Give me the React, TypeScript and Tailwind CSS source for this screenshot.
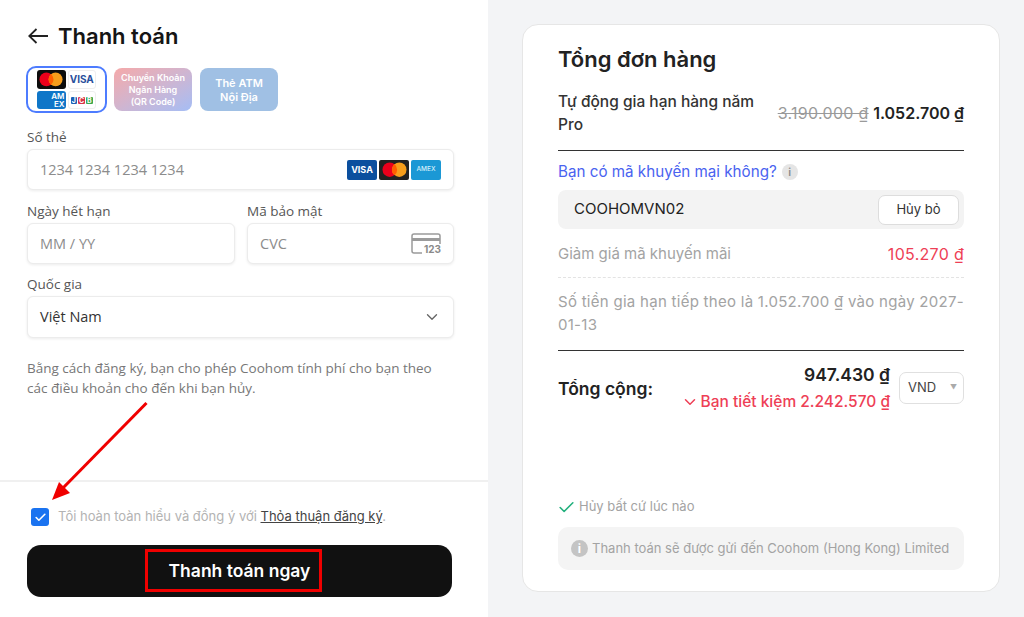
import { Check, ChevronDown } from "lucide-react";

const inputBox = "flex items-center rounded-md border border-[#ececec] bg-white px-3 shadow-[0_1px_3px_rgba(0,0,0,0.08)]";

function MasterCircles({ size }: { size: number }) {
    return (
        <svg width={size} height={(size * 16) / 26} viewBox="0 0 26 16">
            <circle cx="8" cy="8" r="7.5" fill="#eb001b" />
            <circle cx="18" cy="8" r="7.5" fill="#f79e1b" />
            <path d="M13 2.2a7.5 7.5 0 0 1 0 11.6a7.5 7.5 0 0 1 0-11.6z" fill="#ff5f00" />
        </svg>
    );
}

function CardTab() {
    return (
        <div className="-ml-[1px] grid h-[47px] w-[81px] grid-cols-2 gap-[2px] rounded-[10px] border-2 border-[#4d7cff] px-[9px] py-[2px]">
            <div className="flex items-center justify-center rounded-[3px] bg-[#0d0d0d]">
                <MasterCircles size={24} />
            </div>
            <div className="flex items-center justify-center rounded-[3px] border border-[#eeeeee] text-[10px] font-bold text-[#2a4f9c]">
                VISA
            </div>
            <div className="flex items-center justify-end rounded-[3px] bg-[#0f76c8] pr-[1px] text-right text-[8px] font-semibold leading-[8px] text-white">
                AM
                <br />
                EX
            </div>
            <div className="flex items-center justify-center gap-[1px] rounded-[3px] border border-[#eeeeee] text-[7px] font-bold leading-none">
                <span className="rounded-[1px] bg-[#1e5fb5] px-[1px] text-white">J</span>
                <span className="rounded-[1px] bg-[#d8344a] px-[1px] text-white">C</span>
                <span className="rounded-[1px] bg-[#3ba94e] px-[1px] text-white">B</span>
            </div>
        </div>
    );
}

function CvcIcon() {
    return (
        <div className="relative h-[21px] w-[30px]">
            <svg width="30" height="21" viewBox="0 0 30 21" fill="none" stroke="#9b9b9b" strokeWidth="1.5">
                <path d="M11 20H3a2 2 0 0 1-2-2V3a2 2 0 0 1 2-2h24a2 2 0 0 1 2 2v9" />
                <path d="M1 6.5h28" strokeWidth="3" />
            </svg>
            <span className="absolute bottom-[-1px] right-0 bg-white pl-[1px] font-['Inter'] text-[10px] font-bold leading-[11px] text-[#8a8a8a]">123</span>
        </div>
    );
}

function Field({ label, className, children }: { label: string; className?: string; children: React.ReactNode }) {
    return (
        <div className={className}>
            <div className="mb-[2px] h-[20px] font-['Open_Sans'] text-[13.5px] leading-[20px] text-[#555555]">{label}</div>
            {children}
        </div>
    );
}

function LeftPane() {
    return (
        <div className="relative flex h-full w-[488px] shrink-0 flex-col bg-white">
            <div className="flex-1 pl-[27px] pr-[34px] pt-[21px]">
                <div className="flex h-[30px] items-center gap-[10px]">
                    <svg width="20" height="16" viewBox="0 0 20 16" fill="none" stroke="#222222" strokeWidth="1.8" className="ml-[1px]">
                        <path d="M1 8H20M8.5 1L1.2 8l7.3 7" />
                    </svg>
                    <span className="text-[22px] font-semibold text-[#151515]">Thanh toán</span>
                </div>
                <div className="mt-[15px] flex items-center gap-[7px]">
                    <CardTab />
                    <div className="flex h-[43px] w-[78px] flex-col items-center justify-center rounded-[8px] bg-gradient-to-br from-[#f5a9a9] to-[#a4bdf5] text-center text-[9px] font-semibold leading-[12px] text-white">
                        <span>Chuyển Khoản</span>
                        <span>Ngân Hàng</span>
                        <span>(QR Code)</span>
                    </div>
                    <div className="ml-[1px] flex h-[43px] w-[78px] flex-col items-center justify-center rounded-[8px] bg-[#a0c0e4] text-center text-[11px] font-semibold leading-[14px] text-white">
                        <span>Thẻ ATM</span>
                        <span>Nội Địa</span>
                    </div>
                </div>
                <Field label="Số thẻ" className="mt-[14px]">
                    <div className={`${inputBox} h-[41px] justify-between`}>
                        <span className="font-['Open_Sans'] text-[14.5px] text-[#8c8c8c]">1234 1234 1234 1234</span>
                        <div className="flex items-center gap-[2px]">
                            <div className="flex h-[20px] w-[30px] items-center justify-center rounded-[2px] bg-[#0b4f9e] text-[9px] font-bold text-white">VISA</div>
                            <div className="flex h-[20px] w-[30px] items-center justify-center rounded-[2px] bg-[#222222]">
                                <MasterCircles size={25} />
                            </div>
                            <div className="flex h-[20px] w-[30px] items-center justify-center rounded-[2px] bg-[#1b98d5] text-[6.5px] font-medium text-[#d5effa]">AMEX</div>
                        </div>
                    </div>
                </Field>
                <div className="mt-[11px] flex gap-[12px]">
                    <Field label="Ngày hết hạn" className="w-[208px]">
                        <div className={`${inputBox} h-[41px]`}>
                            <span className="font-['Open_Sans'] text-[14.5px] text-[#8c8c8c]">MM / YY</span>
                        </div>
                    </Field>
                    <Field label="Mã bảo mật" className="flex-1">
                        <div className={`${inputBox} h-[41px] justify-between`}>
                            <span className="font-['Open_Sans'] text-[14.5px] text-[#8c8c8c]">CVC</span>
                            <CvcIcon />
                        </div>
                    </Field>
                </div>
                <Field label="Quốc gia" className="mt-[10px]">
                    <div className={`${inputBox} h-[42px] justify-between`}>
                        <span className="font-['Open_Sans'] text-[14.5px] text-[#333333]">Việt Nam</span>
                        <ChevronDown size={18} strokeWidth={1.8} className="text-[#666666]" />
                    </div>
                </Field>
                <p className="mt-[20px] font-['Open_Sans'] text-[13.5px] leading-[20px] text-[#777777]">
                    Bằng cách đăng ký, bạn cho phép Coohom tính phí cho bạn theo
                    <br />
                    các điều khoản cho đến khi bạn hủy.
                </p>
            </div>
            <div className="h-[137px] border-t-2 border-[#f0f0f0] pl-[27px] pr-[36px]">
                <div className="mt-[26px] flex h-[18px] items-center pl-[4px]">
                    <div className="flex h-[18px] w-[18px] items-center justify-center rounded-[3px] bg-[#1a73f0]">
                        <Check size={13} strokeWidth={3} className="text-white" />
                    </div>
                    <span className="ml-[9px] text-[13px] text-[#b3b3b3]">
                        Tôi hoàn toàn hiểu và đồng ý với{" "}
                        <span className="text-[#444444] underline">Thỏa thuận đăng ký</span>.
                    </span>
                </div>
                <button className="mt-[19px] flex h-[52px] w-full items-center justify-center rounded-[14px] bg-[#111111] text-[17.5px] font-semibold text-white">
                    Thanh toán ngay
                </button>
            </div>
            {/* annotations added on top of the screenshot */}
            <div className="absolute left-[145px] top-[549px] h-[43px] w-[177px] border-[3px] border-[#f00000]" />
            <svg className="absolute left-[45px] top-[398px]" width="110" height="106" viewBox="0 0 110 106">
                <path d="M101.5 5L16 92" stroke="#f00000" strokeWidth="3" fill="none" />
                <path d="M7 102L14 84L25 95z" fill="#f00000" />
            </svg>
        </div>
    );
}

function RightPane() {
    return (
        <div className="flex-1 bg-[#f3f4f6] pl-[34px] pr-[24px] pt-[24px]">
            <div className="flex h-[568px] flex-col rounded-[16px] border border-[#e6e6e6] bg-white pl-[35px] pr-[35px] pt-[19px]">
                <h2 className="text-[22px] font-semibold leading-[30px] text-[#222222]">Tổng đơn hàng</h2>
                <div className="mt-[16px] flex items-center justify-between border-b border-[#333333] pb-[14px]">
                    <span className="w-[205px] text-[15.5px] font-medium leading-[23px] text-[#333333]">Tự động gia hạn hàng năm Pro</span>
                    <span className="text-[16px]">
                        <span className="tracking-[0.3px] text-[#9a9a9a] line-through">3.190.000 ₫</span>{" "}
                        <span className="font-semibold text-[#222222]">1.052.700 ₫</span>
                    </span>
                </div>
                <div className="mt-[11px] flex h-[20px] items-center gap-[5px]">
                    <span className="text-[15.2px] text-[#4a63f0]">Bạn có mã khuyến mại không?</span>
                    <span className="flex h-[16px] w-[16px] items-center justify-center rounded-full bg-[#e5e5e5] text-[11px] font-semibold text-[#8c8c8c]">i</span>
                </div>
                <div className="mt-[8px] flex h-[39px] items-center justify-between rounded-[8px] bg-[#f3f3f3] pl-[16px] pr-[5px]">
                    <span className="text-[15px] text-[#222222]">COOHOMVN02</span>
                    <button className="h-[30px] w-[81px] rounded-[7px] border border-[#dddddd] bg-white text-[13px] text-[#333333]">Hủy bỏ</button>
                </div>
                <div className="mt-[15px] flex h-[20px] items-center justify-between">
                    <span className="text-[15px] text-[#a3a3a3]">Giảm giá mã khuyến mãi</span>
                    <span className="text-[16px] tracking-[0.3px] text-[#ee3f56]">105.270 ₫</span>
                </div>
                <div className="mt-[13px] whitespace-nowrap border-t border-dashed border-[#e3e3e3] pt-[12px] text-[15px] leading-[23px] tracking-[0.28px] text-[#a3a3a3]">
                    Số tiền gia hạn tiếp theo là 1.052.700 ₫ vào ngày 2027-
                    <br />
                    01-13
                </div>
                <div className="mt-[14px] flex items-start justify-between border-t border-[#333333] pt-[11px]">
                    <span className="mt-[14px] text-[17.5px] font-semibold text-[#222222]">Tổng cộng:</span>
                    <div className="flex items-start gap-[9px]">
                        <div className="flex flex-col items-end">
                            <span className="text-[17.5px] font-semibold leading-[26px] text-[#222222]">947.430 ₫</span>
                            <span className="mt-[3px] flex items-center gap-[2px] text-[15.5px] font-medium leading-[22px] text-[#ee3f56]">
                                <ChevronDown size={18} strokeWidth={2} />
                                Bạn tiết kiệm 2.242.570 ₫
                            </span>
                        </div>
                        <div className="mt-[10px] flex h-[32px] w-[65px] items-center justify-between rounded-[7px] border border-[#e0e0e0] pl-[8px] pr-[6px] text-[13px] text-[#444444]">
                            VND
                            <span className="text-[7px] text-[#aaaaaa]">▼</span>
                        </div>
                    </div>
                </div>
                <div className="-ml-[1px] mt-auto flex h-[20px] items-center gap-[3px]">
                    <Check size={19} strokeWidth={2} className="text-[#22b07d]" />
                    <span className="text-[13px] text-[#a3a3a3]">Hủy bất cứ lúc nào</span>
                </div>
                <div className="mb-[21px] mt-[10px] flex h-[43px] items-center gap-[4px] rounded-[10px] bg-[#f4f4f4] pl-[13px]">
                    <span className="flex h-[17px] w-[17px] items-center justify-center rounded-full bg-[#c4c4c4] text-[12px] font-bold text-white">i</span>
                    <span className="text-[13px] text-[#a3a3a3]">Thanh toán sẽ được gửi đến Coohom (Hong Kong) Limited</span>
                </div>
            </div>
        </div>
    );
}

export default function App() {
    return (
        <div className="flex h-[617px] w-[1024px] overflow-hidden font-['Inter',sans-serif]">
            <LeftPane />
            <RightPane />
        </div>
    );
}
